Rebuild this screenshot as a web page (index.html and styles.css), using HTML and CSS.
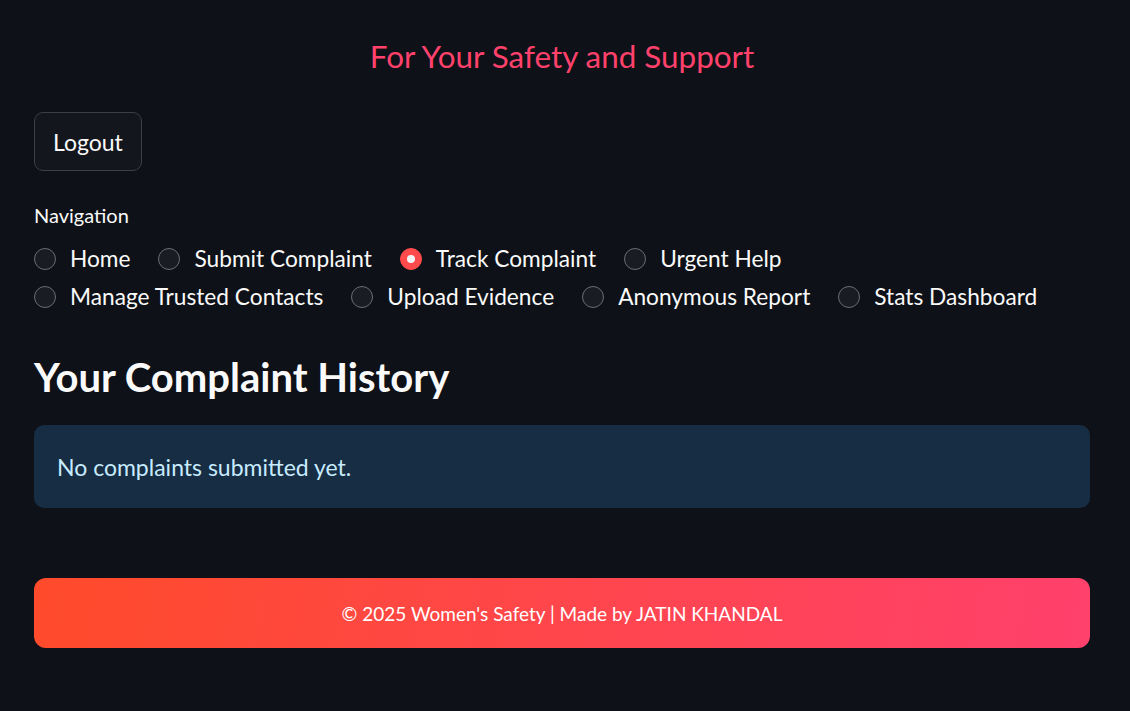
FILE: index.html
```html
<!DOCTYPE html>
<html lang="en">
<head>
<meta charset="utf-8">
<title>Women's Safety</title>
<link rel="stylesheet" href="styles.css">
</head>
<body>
<main class="page">
  <h3 class="tagline">For Your Safety and Support</h3>
  <button class="btn">Logout</button>
  <div class="nav">
    <div class="nav-label">Navigation</div>
    <div class="radios">
      <label class="radio"><span class="dot"></span>Home</label>
      <label class="radio"><span class="dot"></span>Submit Complaint</label>
      <label class="radio"><span class="dot on"></span>Track Complaint</label>
      <label class="radio"><span class="dot"></span>Urgent Help</label>
      <label class="radio"><span class="dot"></span>Manage Trusted Contacts</label>
      <label class="radio"><span class="dot"></span>Upload Evidence</label>
      <label class="radio"><span class="dot"></span>Anonymous Report</label>
      <label class="radio"><span class="dot"></span>Stats Dashboard</label>
    </div>
  </div>
  <h2 class="heading">Your Complaint History</h2>
  <div class="info">No complaints submitted yet.</div>
  <footer class="footer">© 2025 Women's Safety | Made by JATIN KHANDAL</footer>
</main>
</body>
</html>
```

FILE: styles.css
```css
html, body {
  margin: 0;
  padding: 0;
  background: #0e1117;
  color: #fafafa;
  font-family: Lato, "Open Sans", sans-serif;
}
.page {
  padding: 34px 40px 60px 34px;
  display: flex;
  flex-direction: column;
  align-items: flex-start;
}
.tagline {
  align-self: stretch;
  text-align: center;
  margin: 0;
  font-weight: 400;
  font-size: 31.4px;
  line-height: 44px;
  color: #ff416c;
}
.btn {
  margin-top: 34px;
  height: 59px;
  padding: 0 18px;
  border: 1px solid #3b3e46;
  border-radius: 9px;
  background: #13161d;
  color: #fafafa;
  font-family: inherit;
  font-size: 23px;
}
.nav { margin-top: 32px; }
.nav-label {
  font-size: 20px;
  line-height: 24px;
  color: #fafafa;
}
.radios {
  margin-top: 18px;
  display: flex;
  flex-wrap: wrap;
  column-gap: 28px;
  row-gap: 10px;
  max-width: 1040px;
}
.radio {
  display: flex;
  align-items: center;
  gap: 14px;
  font-size: 22.7px;
  line-height: 28px;
}
.dot {
  width: 22px;
  height: 22px;
  box-sizing: border-box;
  border-radius: 50%;
  border: 1.5px solid #6a6d74;
  background: #1a1c23;
  position: relative;
}
.dot.on {
  background: #ff4b4b;
  border-color: #ff4b4b;
}
.dot.on::after {
  content: "";
  position: absolute;
  left: 50%;
  top: 50%;
  width: 8px;
  height: 8px;
  margin: -4px 0 0 -4px;
  border-radius: 50%;
  background: #f5f5f7;
}
.heading {
  margin: 40px 0 0;
  font-size: 40px;
  line-height: 52px;
  font-weight: 700;
}
.info {
  align-self: stretch;
  margin-top: 22px;
  height: 83px;
  box-sizing: border-box;
  padding: 0 23px;
  display: flex;
  align-items: center;
  background: #172d43;
  border-radius: 10px;
  color: #c7ebff;
  font-size: 23px;
}
.footer {
  align-self: stretch;
  margin-top: 70px;
  height: 70px;
  display: flex;
  align-items: center;
  justify-content: center;
  border-radius: 12px;
  background: linear-gradient(100deg, #ff4b2b 0%, #ff416c 100%);
  color: #ffffff;
  font-size: 19px;
}
```
